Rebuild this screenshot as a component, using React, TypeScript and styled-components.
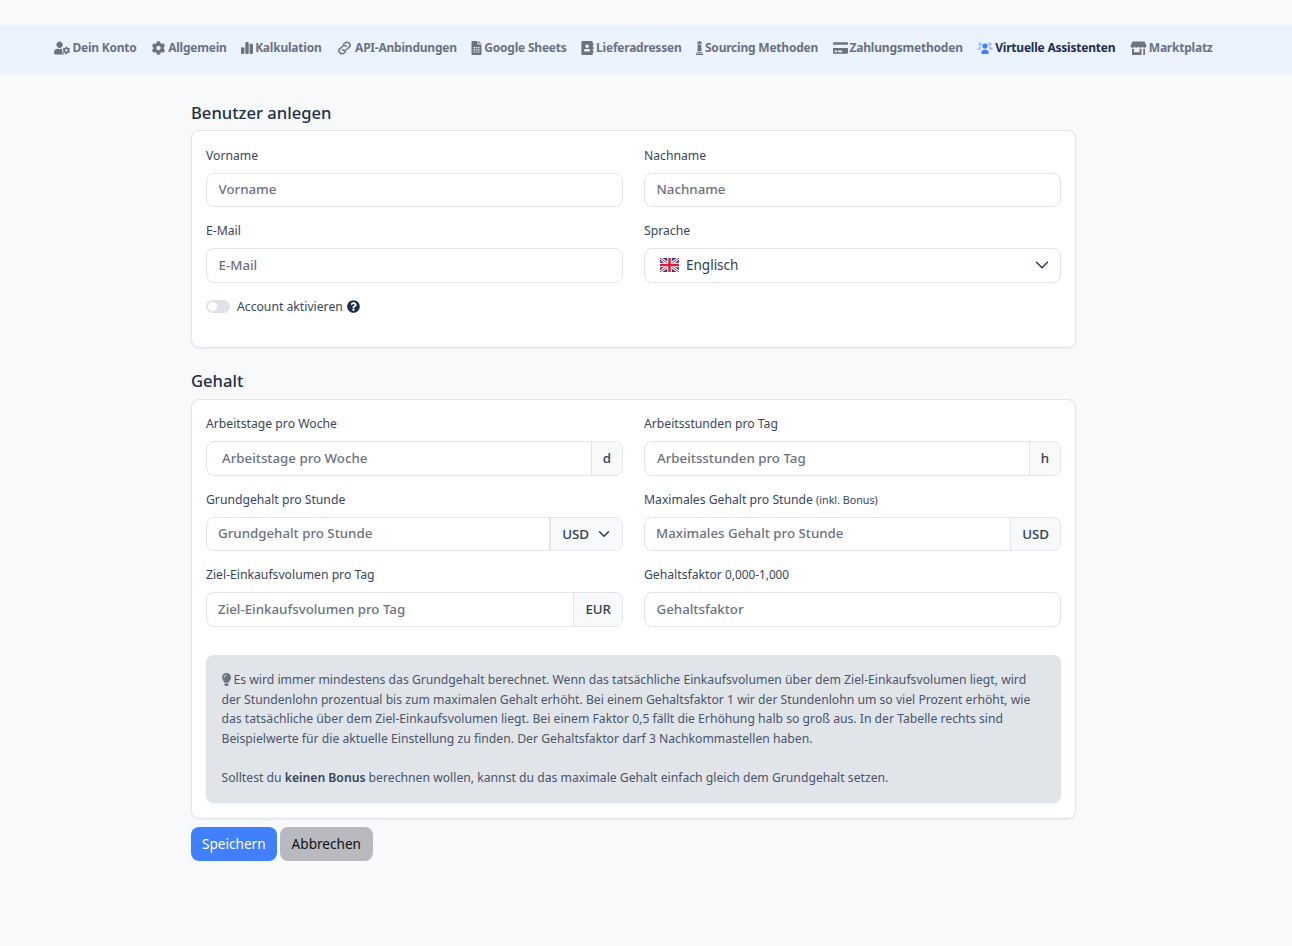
import styled, { createGlobalStyle } from 'styled-components'
import type { ReactNode } from 'react'
import { FaAddressBook, FaCog, FaCreditCard, FaLightbulb, FaQuestionCircle, FaUserCog } from 'react-icons/fa'
import { FaChartSimple } from 'react-icons/fa6'
import { LuChevronDown } from 'react-icons/lu'

const GlobalStyle = createGlobalStyle`
  html, body {
    margin: 0;
    padding: 0;
    background: #f8f9fb;
  }
  body {
    font-family: 'Noto Sans', 'Open Sans', sans-serif;
    font-size: 12.2px;
    color: #1f2f4a;
  }
`

const LinkIcon = () => (
  <svg viewBox='0 0 16 14' fill='none' stroke='currentColor' strokeWidth='1.4'>
    <path d='M6.6 3.6 8.5 2a3 3 0 0 1 4.3.2 3 3 0 0 1-.3 4.2l-2.7 2.3a3 3 0 0 1-4.1-.5' />
    <path d='M9.4 10.4 7.5 12a3 3 0 0 1-4.3-.2 3 3 0 0 1 .3-4.2l2.7-2.3a3 3 0 0 1 4.1.5' />
  </svg>
)

const SheetIcon = () => (
  <svg viewBox='0 0 10 14' fill='currentColor'>
    <path
      fillRule='evenodd'
      d='M1 0h5v3.5h4V13a1 1 0 0 1-1 1H1a1 1 0 0 1-1-1V1a1 1 0 0 1 1-1Zm6 0 3 2.6H7ZM2 6v1.2h1.6V6Zm2.4 0v1.2h1.2V6Zm2 0v1.2H8V6ZM2 8.2v1.2h1.6V8.2Zm2.4 0v1.2h1.2V8.2Zm2 0v1.2H8V8.2ZM2 10.4v1.2h1.6v-1.2Zm2.4 0v1.2h1.2v-1.2Zm2 0v1.2H8v-1.2Z'
    />
  </svg>
)

const ChessIcon = () => (
  <svg viewBox='0 0 7 14' fill='currentColor'>
    <path d='M2.6 0h1.8v1.2H6v1.6H1V1.2h1.6ZM1.8 3.6h3.4l.3 6.4h-4ZM1 10.8h5l.4 1H.6ZM0 12.4h7V14H0Z' />
  </svg>
)

const TeamIcon = () => (
  <svg viewBox='0 0 17 14'>
    <g fill='#a9c3fb'>
      <circle cx='3.4' cy='3' r='2.1' />
      <circle cx='13.6' cy='3' r='2.1' />
      <path d='M.2 9.2C.2 7.2 1.4 6 3 6h1c.5 0 .8.1 1.1.3-.9.7-1.5 1.7-1.6 2.9ZM16.8 9.2C16.8 7.2 15.6 6 14 6h-1c-.5 0-.8.1-1.1.3.9.7 1.5 1.7 1.6 2.9Z' />
    </g>
    <g fill='#4080ff'>
      <circle cx='8.5' cy='5' r='2.7' />
      <path d='M4.5 12.4c0-2 1.3-3.6 3-3.6h2c1.7 0 3 1.6 3 3.6 0 .6-.4 1-1 1h-6c-.6 0-1-.4-1-1Z' />
    </g>
  </svg>
)

const ShopIcon = () => (
  <svg viewBox='0 0 16 14' fill='currentColor'>
    <path d='M2 .5h12l2 4.5c0 1-1 1.7-2 1.7s-1.5-.4-2-1c-.5.6-1.2 1-2 1s-1.5-.4-2-1c-.5.6-1.2 1-2 1s-1.5-.4-2-1c-.5.6-1 1-2 1S0 6 0 5Z' />
    <path d='M1.5 7.8h2v3.4H9V7.8h2V14H1.5ZM12.8 7.8h1.7V14h-1.7Z' />
  </svg>
)

const navItems = [
  { label: 'Dein Konto', icon: <FaUserCog />, iconWidth: 16 },
  { label: 'Allgemein', icon: <FaCog />, iconWidth: 15 },
  { label: 'Kalkulation', icon: <FaChartSimple />, iconWidth: 12 },
  { label: 'API-Anbindungen', icon: <LinkIcon />, iconWidth: 17 },
  { label: 'Google Sheets', icon: <SheetIcon />, iconWidth: 11 },
  { label: 'Lieferadressen', icon: <FaAddressBook />, iconWidth: 13 },
  { label: 'Sourcing Methoden', icon: <ChessIcon />, iconWidth: 7 },
  { label: 'Zahlungsmethoden', icon: <FaCreditCard />, iconWidth: 15 },
  { label: 'Virtuelle Assistenten', icon: <TeamIcon />, iconWidth: 16, active: true },
  { label: 'Marktplatz', icon: <ShopIcon />, iconWidth: 17 },
]

const UkFlag = () => (
  <svg width='19' height='14' viewBox='0 0 19 14'>
    <rect width='19' height='14' rx='1' fill='#2b3f87' />
    <path d='M0 0 19 14M19 0 0 14' stroke='#fff' strokeWidth='3' />
    <path d='M0 0 19 14M19 0 0 14' stroke='#d8203a' strokeWidth='1' />
    <path d='M9.5 0v14M0 7h19' stroke='#fff' strokeWidth='4.5' />
    <path d='M9.5 0v14M0 7h19' stroke='#d8203a' strokeWidth='2.5' />
  </svg>
)

const Field = ({ label, hint, children }: { label: string; hint?: ReactNode; children: ReactNode }) => (
  <FieldWrap>
    <Label>
      {label} {hint}
    </Label>
    {children}
  </FieldWrap>
)

const App = () => (
  <Page>
    <GlobalStyle />
    <Nav>
      {navItems.map(({ label, icon, iconWidth, active }) => (
        <NavItem key={label} $active={active} $iconWidth={iconWidth}>
          {icon}
          <span>{label}</span>
        </NavItem>
      ))}
    </Nav>
    <Container>
      <Heading>Benutzer anlegen</Heading>
      <Card>
        <FormGrid>
          <Field label='Vorname'>
            <Input placeholder='Vorname' />
          </Field>
          <Field label='Nachname'>
            <Input placeholder='Nachname' />
          </Field>
          <Field label='E-Mail'>
            <Input placeholder='E-Mail' />
          </Field>
          <Field label='Sprache'>
            <SelectBox>
              <UkFlag />
              <span>Englisch</span>
              <LuChevronDown />
            </SelectBox>
          </Field>
        </FormGrid>
        <ToggleRow>
          <Toggle />
          <span>Account aktivieren</span>
          <FaQuestionCircle />
        </ToggleRow>
      </Card>

      <Heading>Gehalt</Heading>
      <Card>
        <FormGrid>
          <Field label='Arbeitstage pro Woche'>
            <InputGroup>
              <GroupInput $pad={15} placeholder='Arbeitstage pro Woche' />
              <Addon>d</Addon>
            </InputGroup>
          </Field>
          <Field label='Arbeitsstunden pro Tag'>
            <InputGroup>
              <GroupInput $pad={12} placeholder='Arbeitsstunden pro Tag' />
              <Addon>h</Addon>
            </InputGroup>
          </Field>
          <Field label='Grundgehalt pro Stunde'>
            <InputGroup>
              <GroupInput placeholder='Grundgehalt pro Stunde' />
              <CurrencySelect>
                USD <LuChevronDown />
              </CurrencySelect>
            </InputGroup>
          </Field>
          <Field label='Maximales Gehalt pro Stunde' hint={<Hint $size={10.7}>(inkl. Bonus)</Hint>}>
            <InputGroup>
              <GroupInput placeholder='Maximales Gehalt pro Stunde' />
              <Addon>USD</Addon>
            </InputGroup>
          </Field>
          <Field label='Ziel-Einkaufsvolumen pro Tag'>
            <InputGroup>
              <GroupInput placeholder='Ziel-Einkaufsvolumen pro Tag' />
              <Addon>EUR</Addon>
            </InputGroup>
          </Field>
          <Field label='Gehaltsfaktor' hint={<Hint $size={11.8}>0,000-1,000</Hint>}>
            <Input placeholder='Gehaltsfaktor' />
          </Field>
        </FormGrid>
        <Note>
          <p>
            <FaLightbulb />
            Es wird immer mindestens das Grundgehalt berechnet. Wenn das tatsächliche Einkaufsvolumen über dem
            Ziel-Einkaufsvolumen liegt, wird der Stundenlohn prozentual bis zum maximalen Gehalt erhöht. Bei einem
            Gehaltsfaktor 1 wir der Stundenlohn um so viel Prozent erhöht, wie das tatsächliche über dem
            Ziel-Einkaufsvolumen liegt. Bei einem Faktor 0,5 fällt die Erhöhung halb so groß aus. In der Tabelle rechts
            sind Beispielwerte für die aktuelle Einstellung zu finden. Der Gehaltsfaktor darf 3 Nachkommastellen haben.
          </p>
          <p>
            Solltest du <b>keinen Bonus</b> berechnen wollen, kannst du das maximale Gehalt einfach gleich dem
            Grundgehalt setzen.
          </p>
        </Note>
      </Card>
      <Buttons>
        <Button $primary>Speichern</Button>
        <Button>Abbrechen</Button>
      </Buttons>
    </Container>
  </Page>
)

const Page = styled.div`
  min-height: 946px;
  padding-top: 25px;
  box-sizing: border-box;
`

const Nav = styled.nav`
  display: flex;
  justify-content: center;
  align-items: center;
  gap: 14.5px;
  box-sizing: border-box;
  height: 49px;
  padding: 0 25px 4px 0;
  background: #ebf3fe;
`

const NavItem = styled.a<{ $active?: boolean; $iconWidth: number }>`
  display: flex;
  align-items: center;
  gap: 2px;
  font-size: 12px;
  letter-spacing: -0.22px;
  font-weight: 700;
  color: ${({ $active }) => ($active ? '#1f2f4a' : '#6b7280')};
  white-space: nowrap;

  > svg {
    flex: none;
    width: ${({ $iconWidth }) => $iconWidth}px;
    height: 14px;
  }
`

const Container = styled.main`
  width: 885px;
  margin-left: 191px;
  padding-top: 26.5px;
`

const Heading = styled.h2`
  margin: 0 0 5.5px;
  font-size: 16.6px;
  line-height: 24px;
  font-weight: 500;
  color: #1f2f4a;
`

const Card = styled.section`
  box-sizing: border-box;
  padding: 14.5px 14px 15px;
  margin-bottom: 21px;
  background: #fff;
  border: 1px solid #e1e4e9;
  border-radius: 8px;
  box-shadow: 0 1px 2px rgba(31, 47, 74, 0.05);
`

const FormGrid = styled.div`
  display: grid;
  grid-template-columns: 1fr 1fr;
  column-gap: 21px;
  row-gap: 14px;
`

const FieldWrap = styled.div`
  min-width: 0;
`

const Label = styled.label`
  display: block;
  height: 19.5px;
  margin-bottom: 7.5px;
  line-height: 19.5px;
  color: #38465c;
`

const Hint = styled.small<{ $size: number }>`
  font-size: ${({ $size }) => $size}px;
  line-height: 1;
`

const Input = styled.input`
  display: block;
  box-sizing: border-box;
  width: 100%;
  height: 34.5px;
  padding: 0 11.5px 1px;
  border: 1px solid #e1e4e9;
  border-radius: 8px;
  background: #fff;
  font: inherit;
  font-size: 13.3px;
  font-weight: 500;
  outline: none;

  &::placeholder {
    color: #6b7280;
    opacity: 1;
  }
`

const SelectBox = styled.div`
  display: flex;
  align-items: center;
  gap: 7px;
  box-sizing: border-box;
  height: 34.5px;
  padding: 0 7px 0 15px;
  border: 1px solid #e1e4e9;
  border-radius: 8px;
  background: #fff;
  font-size: 13.5px;
  color: #2f3d56;

  > span {
    flex: 1;
  }

  > svg:last-child {
    width: 22px;
    height: 22px;
    stroke-width: 1.6;
  }
`

const ToggleRow = styled.div`
  display: flex;
  align-items: center;
  gap: 7px;
  margin: 14px 0 16px;
  line-height: 19.5px;
  color: #38465c;

  > svg {
    width: 13px;
    height: 13px;
    margin-left: -3px;
    color: #1f2f4a;
  }
`

const Toggle = styled.span`
  position: relative;
  display: block;
  width: 24px;
  height: 13px;
  border-radius: 7px;
  background: #dfe2e6;

  &::before {
    content: '';
    position: absolute;
    left: 2px;
    top: 2px;
    width: 9px;
    height: 9px;
    border-radius: 50%;
    background: #fff;
  }
`

const InputGroup = styled.div`
  display: flex;
  box-sizing: border-box;
  height: 34.5px;
  border: 1px solid #e1e4e9;
  border-radius: 8px;
  overflow: hidden;
  background: #fff;
`

const GroupInput = styled.input<{ $pad?: number }>`
  flex: 1;
  min-width: 0;
  padding: 0 ${({ $pad = 11 }) => $pad}px 1px;
  border: 0;
  background: transparent;
  font: inherit;
  font-size: 13.3px;
  font-weight: 500;
  outline: none;

  &::placeholder {
    color: #6b7280;
    opacity: 1;
  }
`

const Addon = styled.span`
  display: flex;
  align-items: center;
  padding: 0 11px;
  border-left: 1px solid #e1e4e9;
  background: #f8f9fb;
  font-size: 13.3px;
  font-weight: 500;
  color: #2f3d56;
`

const CurrencySelect = styled(Addon)`
  gap: 6px;
  padding-right: 9px;
  border-left-width: 2px;

  > svg {
    width: 18px;
    height: 18px;
  }
`

const Note = styled.div`
  margin-top: 28px;
  padding: 15.7px 15.5px;
  border-radius: 8px;
  background: #e1e4e9;
  box-shadow: 0 1px 2px rgba(31, 47, 74, 0.08);
  line-height: 19.6px;
  color: #48566b;

  p {
    margin: 0;
  }

  p + p {
    margin-top: 19.6px;
  }

  b {
    font-weight: 600;
    color: #38465c;
  }

  svg {
    width: 9px;
    height: 13px;
    margin-right: 3px;
    vertical-align: -2px;
    color: #6b7280;
  }
`

const Buttons = styled.div`
  display: flex;
  gap: 3px;
  margin-top: -13px;
`

const Button = styled.button<{ $primary?: boolean }>`
  height: 34px;
  padding: 0 ${({ $primary }) => ($primary ? '11px' : '12px')} 2px;
  border: 0;
  border-radius: 8px;
  background: ${({ $primary }) => ($primary ? '#4080ff' : '#b8babf')};
  color: ${({ $primary }) => ($primary ? '#fff' : '#111')};
  font: inherit;
  font-size: 13.6px;
`

export default App
